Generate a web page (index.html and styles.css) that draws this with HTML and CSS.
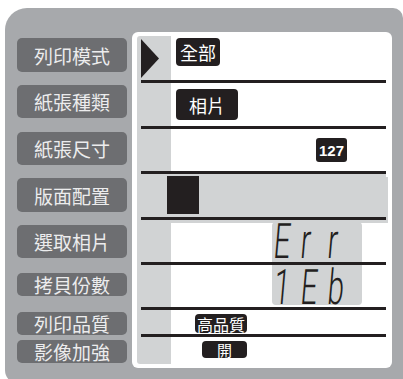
FILE: index.html
```html
<!DOCTYPE html>
<html lang="zh-Hant">
<head>
<meta charset="utf-8">
<title>LCD</title>
<link rel="stylesheet" href="styles.css">
</head>
<body>
<div class="device">
  <div class="menu">
    <div class="btn b1">列印模式</div>
    <div class="btn b2">紙張種類</div>
    <div class="btn b3">紙張尺寸</div>
    <div class="btn b4">版面配置</div>
    <div class="btn b5">選取相片</div>
    <div class="btn b6">拷貝份數</div>
    <div class="btn b7">列印品質</div>
    <div class="btn b8">影像加強</div>
  </div>
  <div class="screen">
    <div class="rows">
      <div class="row r1">
        <svg class="arrow" width="18" height="39" viewBox="0 0 18 39"><polygon points="0,0 18,19.5 0,39" fill="#231f20"/></svg>
        <span class="badge all">全部</span>
      </div>
      <div class="row r2"><span class="badge photo">相片</span></div>
      <div class="row r3"><span class="badge num">127</span></div>
      <div class="row r4"><span class="block"></span></div>
      <div class="row r5"><div class="lcd lcd-top"><span class="seg">E</span><span class="seg">r</span><span class="seg">r</span></div></div>
      <div class="row r6"><div class="lcd lcd-bottom"><span class="seg">1</span><span class="seg">E</span><span class="seg">b</span></div></div>
      <div class="row r7"><span class="badge small quality">高品質</span></div>
      <div class="row r8"><span class="badge small on">開</span></div>
    </div>
  </div>
</div>
</body>
</html>
```
FILE: styles.css
```css
html, body {
  margin: 0;
  padding: 0;
}
body {
  width: 403px;
  height: 379px;
  overflow: hidden;
  background: #ffffff;
  font-family: "Noto Sans CJK TC", "Noto Sans", sans-serif;
}
.device {
  margin: 8px 0 0 5px;
  width: 398px;
  height: 376px;
  background: #a7a9ac;
  border-radius: 22px 10px 0 14px;
  display: flex;
  align-items: flex-start;
}
.menu {
  width: 127px;
  box-sizing: border-box;
  padding: 30px 0 0 12px;
  display: flex;
  flex-direction: column;
}
.btn {
  width: 110px;
  background: #6d6e71;
  color: #ececed;
  border-radius: 5px;
  display: flex;
  align-items: center;
  justify-content: center;
  font-size: 19px;
  line-height: 1;
}
.b1 { height: 34px; }
.b2 { height: 33px; margin-top: 13px; }
.b3 { height: 33px; margin-top: 14px; }
.b4 { height: 34px; margin-top: 13px; }
.b5 { height: 33px; margin-top: 13px; }
.b6 { height: 23px; margin-top: 15px; }
.b7 { height: 23px; margin-top: 16px; }
.b8 { height: 23px; margin-top: 5px; }

.screen {
  margin-top: 24px;
  width: 260px;
  height: 336px;
  box-sizing: border-box;
  padding: 4px 0 0 5px;
  background: #ffffff;
  border-radius: 6px;
}
.rows {
  width: 251px;
  height: 328px;
  background: linear-gradient(to right, #d1d3d4 34px, transparent 34px);
  border-radius: 3px;
}
.row {
  margin-left: 4px;
  width: 245px;
  border-bottom: 3px solid #231f20;
  display: flex;
  align-items: flex-start;
}
.r1 { height: 44px; }
.r2 { height: 43px; }
.r3 { height: 42px; }
.r4 {
  height: 43px;
  background: #d1d3d4;
  box-shadow: 2px 3px 0 #d1d3d4;
}
.r5 { height: 42px; }
.r6 { height: 42px; }
.r7 { height: 24px; }
.r8 { height: 27px; border-bottom: 0; }

.arrow {
  display: block;
  margin-top: 3px;
  flex: none;
}
.badge {
  background: #231f20;
  color: #ffffff;
  border-radius: 4px;
  display: flex;
  align-items: center;
  justify-content: center;
  font-size: 18px;
  line-height: 1;
  flex: none;
}
.all {
  margin: 2px 0 0 17px;
  width: 44px;
  height: 28px;
}
.photo {
  margin: 6px 0 0 35px;
  width: 62px;
  height: 31px;
}
.num {
  margin: 9px 0 0 175px;
  width: 31px;
  height: 24px;
  font-family: "Liberation Sans", Arial, sans-serif;
  font-weight: bold;
  font-size: 15px;
  border-radius: 3px;
}
.block {
  display: block;
  margin: 2px 0 0 26px;
  width: 32px;
  height: 38px;
  background: #231f20;
}
.lcd {
  margin-left: 131px;
  width: 90px;
  height: 40px;
  background: #d1d3d4;
  box-sizing: border-box;
  padding-left: 4px;
  display: flex;
  align-items: flex-start;
  font-family: "Roboto", "DejaVu Sans", sans-serif;
  font-weight: 300;
  color: #231f20;
}
.lcd-top {
  margin-top: 2px;
  border-radius: 4px 4px 0 0;
}
.lcd-bottom {
  border-radius: 0 0 4px 4px;
}
.seg {
  display: block;
  width: 27px;
  font-size: 49px;
  line-height: 49px;
  transform: skewX(-5deg) scaleX(0.6);
  transform-origin: left top;
}
.lcd-top .seg { margin-top: -5px; }
.lcd-bottom .seg { margin-top: -2px; }
.small {
  border-radius: 4px;
}
.quality {
  margin: 4px 0 0 54px;
  width: 52px;
  height: 19px;
  font-size: 16px;
}
.on {
  margin: 4px 0 0 61px;
  width: 45px;
  height: 17px;
  font-size: 15px;
}
```
